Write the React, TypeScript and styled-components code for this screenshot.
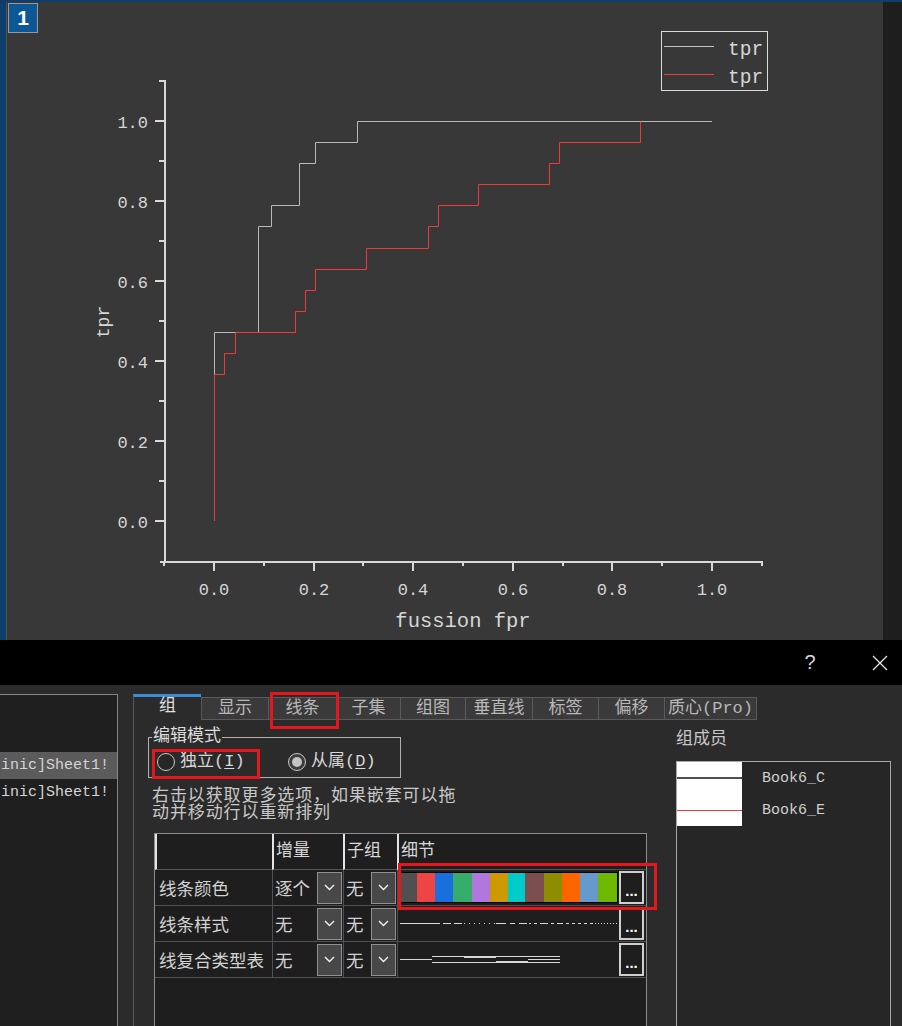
import React from "react";
import styled, { createGlobalStyle, css } from "styled-components";

const MONO = `"Liberation Mono", "Noto Sans CJK SC", monospace`;

const GlobalStyle = createGlobalStyle`
  html, body { margin: 0; padding: 0; background: #2b2b2b; overflow: hidden; }
  #root { width: 902px; height: 1026px; }
`;

const Screen = styled.div`
  position: relative;
  width: 902px;
  height: 1026px;
  display: flex;
  flex-direction: column;
  overflow: hidden;
  font-family: ${MONO};
  background: #2b2b2b;
`;

/* ---------- graph window ---------- */
const GraphWindow = styled.section`
  flex: none;
  height: 640px;
  display: flex;
  box-sizing: border-box;
  padding: 2px 0 0 6px;
  background: #0f3e6a;
`;

const GraphCanvas = styled.div`
  position: relative;
  flex: 1;
  background: #383838;
  border-left: 1px solid #505050;
  overflow: hidden;
`;

const ScrollGutter = styled.div`
  flex: none;
  width: 19px;
  background: #1e1e1e;
`;

const LayerBadge = styled.div`
  position: absolute;
  left: 1px;
  top: 1px;
  width: 30px;
  height: 30px;
  box-sizing: border-box;
  border: 1px solid #9a9a9a;
  background: #0d5894;
  color: #fff;
  font: 700 21px/28px "Liberation Sans", Arial, sans-serif;
  text-align: center;
`;

const PlotSvg = styled.svg`
  display: block;
  font-family: "Liberation Mono", monospace;
`;

/* ---------- dialog ---------- */
const TitleBar = styled.header`
  flex: none;
  height: 45px;
  background: #000;
  display: flex;
  justify-content: flex-end;
  align-items: center;
  gap: 26px;
`;

const TitleButton = styled.div`
  width: 44px;
  height: 45px;
  display: flex;
  align-items: center;
  justify-content: center;
  color: #d8d8d8;
  font: 20px "Liberation Sans", Arial, sans-serif;
`;

const DialogBody = styled.div`
  flex: 1;
  display: flex;
  min-height: 0;
`;

const SourcePanel = styled.div`
  flex: none;
  width: 118px;
  box-sizing: border-box;
  margin-top: 9px;
  border-top: 1px solid #858585;
  border-right: 1px solid #858585;
  background: #1f1f1f;
  padding-top: 57px;
`;

const SourceRow = styled.div<{ $selected?: boolean }>`
  height: 27px;
  line-height: 27px;
  padding-left: 1px;
  font-size: 15px;
  color: #d4d4d4;
  white-space: nowrap;
  overflow: hidden;
  background: ${(p) => (p.$selected ? "#5b5b5b" : "transparent")};
`;

const TabArea = styled.div`
  flex: none;
  width: 527px;
  margin: 9px 0 0 15px;
  display: flex;
  flex-direction: column;
`;

const TabBar = styled.div`
  flex: none;
  height: 26px;
  display: flex;
  align-items: flex-end;
`;

const Tab = styled.div<{ $w: number; $active?: boolean; $last?: boolean }>`
  flex: none;
  width: ${(p) => p.$w}px;
  box-sizing: border-box;
  text-align: center;
  font-size: 17px;
  white-space: nowrap;
  ${(p) =>
    p.$active
      ? css`
          height: 26px;
          border-top: 3px solid #3d8bd4;
          border-left: 1px solid #5a5a5a;
          background: #2b2b2b;
          color: #e0e0e0;
          line-height: 19px;
        `
      : css`
          height: 23px;
          border: 1px solid #5a5a5a;
          border-right-width: ${p.$last ? 1 : 0}px;
          background: #3a3a3a;
          color: #b8b8b8;
          line-height: 21px;
        `}
`;

const TabPane = styled.div`
  flex: 1;
  border-left: 1px solid #5a5a5a;
  display: flex;
  flex-direction: column;
  align-items: flex-start;
`;

const ModeGroup = styled.fieldset`
  margin: 8px 0 0 14px;
  padding: 0;
  width: 253px;
  box-sizing: border-box;
  border: 1px solid #b0b0b0;
`;

const ModeLegend = styled.legend`
  margin-left: 3px;
  padding: 0 1px;
  font-size: 17px;
  line-height: 18px;
  color: #dcdcdc;
`;

const RadioRow = styled.div`
  height: 31px;
  display: flex;
  align-items: center;
  padding-left: 8px;
`;

const RadioOption = styled.label<{ $w: number }>`
  width: ${(p) => p.$w}px;
  display: flex;
  align-items: center;
  gap: 5px;
  font-size: 17px;
  line-height: 20px;
  color: #d8d8d8;
  u { text-decoration: underline; text-underline-offset: 2px; }
`;

const RadioMark = styled.span<{ $checked?: boolean }>`
  width: 18px;
  height: 18px;
  box-sizing: border-box;
  border-radius: 50%;
  border: 1px solid #c8c8c8;
  background: ${(p) => (p.$checked ? "#3c3c3c" : "#262626")};
  display: flex;
  align-items: center;
  justify-content: center;
  &::after {
    content: "";
    display: ${(p) => (p.$checked ? "block" : "none")};
    width: 10px;
    height: 10px;
    border-radius: 50%;
    background: #c4c4c4;
  }
`;

const HelpText = styled.p`
  margin: 10px 0 0 18px;
  width: 312px;
  font-size: 17px;
  letter-spacing: 0.9px;
  line-height: 17px;
  color: #c9c9c9;
`;

const PropTable = styled.div`
  margin: 11px 0 0 20px;
  width: 493px;
  height: 200px;
  box-sizing: border-box;
  border: 1px solid #8c8c8c;
  border-bottom: none;
  background: #1e1e1e;
  display: grid;
  grid-template-columns: 117px 71px 54px 249px;
  grid-auto-rows: 36px;
  align-content: start;
`;

const HeadCell = styled.div`
  box-sizing: border-box;
  border-left: 2px solid #e4e4e4;
  border-bottom: 1px solid #555;
  padding-left: 2px;
  font-size: 17px;
  line-height: 35px;
  color: #d8d8d8;
`;

const BodyCell = styled.div<{ $first?: boolean }>`
  box-sizing: border-box;
  border-left: ${(p) => (p.$first ? "none" : "1px solid #505050")};
  border-bottom: 1px solid #505050;
  display: flex;
  align-items: center;
  justify-content: space-between;
  padding: 0 1px 0 ${(p) => (p.$first ? 4 : 2)}px;
  font-size: 17.5px;
  color: #d2d2d2;
  white-space: nowrap;
`;

const DetailCell = styled(BodyCell)`
  justify-content: flex-start;
  gap: 1px;
  padding-left: 2px;
`;

const DropButton = styled.div`
  flex: none;
  width: 25px;
  height: 32px;
  box-sizing: border-box;
  background: #484848;
  border: 1px solid #909090;
  display: flex;
  align-items: center;
  justify-content: center;
`;

const SwatchBar = styled.div`
  flex: none;
  width: 218px;
  height: 31px;
  box-sizing: border-box;
  border: 1px solid #000;
  background: #000;
  display: flex;
`;

const Swatch = styled.div<{ $c: string; $w: number }>`
  width: ${(p) => p.$w}px;
  background: ${(p) => p.$c};
`;

const PatternSvg = styled.svg`
  flex: none;
  display: block;
`;

const EllipsisButton = styled.div`
  flex: none;
  width: 25px;
  height: 33px;
  box-sizing: border-box;
  border: 2px solid #cfcfcf;
  background: #1e1e1e;
  color: #fff;
  display: flex;
  align-items: flex-end;
  justify-content: center;
  padding-bottom: 6px;
  font: 700 15px/10px "Liberation Sans", Arial, sans-serif;
  letter-spacing: 0px;
`;

const MemberColumn = styled.div`
  flex: none;
  width: 215px;
  margin: 45px 0 0 16px;
  display: flex;
  flex-direction: column;
`;

const MemberLabel = styled.div`
  font-size: 17px;
  line-height: 20px;
  color: #c8c8c8;
`;

const MemberList = styled.div`
  margin-top: 11px;
  flex: 1;
  border: 1px solid #a8a8a8;
  border-bottom: none;
  background: #262626;
`;

const MemberItem = styled.div`
  height: 32px;
  display: flex;
  align-items: center;
`;

const MemberSwatch = styled.div`
  flex: none;
  width: 65px;
  height: 32px;
  background: #fff;
  display: flex;
  align-items: center;
`;

const SwatchLine = styled.div<{ $c: string; $h: number }>`
  width: 100%;
  height: ${(p) => p.$h}px;
  background: ${(p) => p.$c};
`;

const MemberName = styled.span`
  margin-left: 20px;
  font-size: 15px;
  color: #d0d0d0;
`;

const Annotation = styled.div<{ $x: number; $y: number; $w: number; $h: number }>`
  position: absolute;
  left: ${(p) => p.$x}px;
  top: ${(p) => p.$y}px;
  width: ${(p) => p.$w}px;
  height: ${(p) => p.$h}px;
  box-sizing: border-box;
  border: 3px solid #e5161e;
  pointer-events: none;
`;

/* ---------- plot ---------- */
const X = (v: number) => 214 + v * 498;
const Y = (v: number) => 521 - v * 400;
const AXIS = "#d9d9d9";
const LABEL = "#d6d6d6";

function RocPlot() {
  const idx = Array.from({ length: 13 }, (_, i) => i - 1);
  const gray =
    "M214.5,521 V332.5 H258.5 V226.5 H271.5 V205.5 H299.5 V163.5 H315.5 V142.5 H357.5 V121.5 H712";
  const red =
    "M214.5,521 V374.5 H224.5 V353.5 H235.5 V332.5 H295.5 V311.5 H305.5 V290.5 H315.5 V269.5 H366.5 V248.5 H428.5 V226.5 H438.5 V205.5 H478.5 V184.5 H549.5 V163.5 H559.5 V142.5 H640.5 V121.5";
  return (
    <PlotSvg width={876} height={638} viewBox="7 2 876 638">
      <line x1={165} y1={80} x2={165} y2={563} stroke={AXIS} strokeWidth={2} />
      <line x1={160} y1={562} x2={763} y2={562} stroke={AXIS} strokeWidth={2} />
      {idx
        .filter((i) => i >= 0)
        .map((i) => {
          const y = Math.round(Y(i / 10));
          const major = i % 2 === 0 && i <= 10;
          return (
            <line key={"yt" + i} x1={major ? 155 : 159} y1={y} x2={165} y2={y} stroke={AXIS} strokeWidth={2} />
          );
        })}
      {idx.map((i) => {
        const x = Math.round(X(i / 10));
        const major = i % 2 === 0 && i >= 0 && i <= 10;
        return (
          <line key={"xt" + i} x1={x} y1={562} x2={x} y2={major ? 571 : 566} stroke={AXIS} strokeWidth={2} />
        );
      })}
      {[0, 0.2, 0.4, 0.6, 0.8, 1.0].map((v) => (
        <text key={"yl" + v} x={148} y={Math.round(Y(v)) + 7} textAnchor="end" fontSize={17} fill={LABEL}>
          {v.toFixed(1)}
        </text>
      ))}
      {[0, 0.2, 0.4, 0.6, 0.8, 1.0].map((v) => (
        <text key={"xl" + v} x={Math.round(X(v))} y={595} textAnchor="middle" fontSize={17} fill={LABEL}>
          {v.toFixed(1)}
        </text>
      ))}
      <text x={463} y={627} textAnchor="middle" fontSize={20.5} fill={LABEL}>
        fussion fpr
      </text>
      <text transform="translate(109 322) rotate(-90)" textAnchor="middle" fontSize={18} fill={LABEL}>
        tpr
      </text>
      <path d={gray} fill="none" stroke="#b9b9b9" strokeWidth={1} />
      <path d={red} fill="none" stroke="#f03a3a" strokeWidth={1} />
      <rect x={661.5} y={31.5} width={106} height={59} fill="none" stroke="#dadada" strokeWidth={1} />
      <line x1={664} y1={46.5} x2={714} y2={46.5} stroke="#c4c4c4" strokeWidth={1} />
      <line x1={664} y1={74.5} x2={714} y2={74.5} stroke="#f03a3a" strokeWidth={1} />
      <text x={728} y={55} fontSize={19.5} fill={LABEL}>
        tpr
      </text>
      <text x={728} y={83} fontSize={19.5} fill={LABEL}>
        tpr
      </text>
    </PlotSvg>
  );
}

/* ---------- table pieces ---------- */
const Chevron = () => (
  <svg width="11" height="7" viewBox="0 0 11 7">
    <polyline points="1,1 5.5,5.5 10,1" fill="none" stroke="#f2f2f2" strokeWidth="1.4" />
  </svg>
);

const swatches: [string, number][] = [
  ["#505050", 16],
  ["#ee4444", 18],
  ["#1a6fdf", 18],
  ["#37ad6b", 19],
  ["#b177de", 18],
  ["#cc9900", 18],
  ["#00cbcc", 18],
  ["#7d4e4e", 19],
  ["#8e8c00", 18],
  ["#fb6500", 18],
  ["#6699cc", 18],
  ["#6fb802", 19],
];

const styleSegments: [number, number][] = [
  [0, 40], [43, 51], [54, 62], [64, 65], [69, 70], [74, 75], [79, 80], [84, 85], [89, 90], [94, 95],
  [96, 106], [110, 115], [119, 127], [129, 131], [134, 137], [140, 148], [151, 154], [157, 163],
  [166, 169], [172, 175], [178, 181], [184, 187], [190, 193], [195, 196], [198, 199], [201, 202],
  [204, 205], [207, 208], [210, 211], [213, 214], [216, 217],
];

const LineStyles = () => (
  <PatternSvg width="218" height="33" viewBox="0 0 218 33">
    <path d={styleSegments.map(([a, b]) => `M${a} 16.5H${b}`).join("")} stroke="#d8d8d8" strokeWidth="1" />
  </PatternSvg>
);

const CompoundLines = () => (
  <PatternSvg width="218" height="33" viewBox="0 0 218 33">
    <path d="M0 16.5H32 M32 13.5H160 M32 19.5H160 M128 16.5H160" stroke="#d8d8d8" strokeWidth="1" />
    <rect x="64" y="13" width="32" height="2" fill="#d8d8d8" />
    <rect x="96" y="18" width="32" height="2" fill="#d8d8d8" />
  </PatternSvg>
);

const tabs = [
  { label: "组", w: 68, active: true },
  { label: "显示", w: 67 },
  { label: "线条", w: 68 },
  { label: "子集", w: 64 },
  { label: "组图", w: 65 },
  { label: "垂直线", w: 67 },
  { label: "标签", w: 66 },
  { label: "偏移", w: 66 },
  { label: "质心(Pro)", w: 93 },
];

const rows = [
  { name: "线条颜色", inc: "逐个", detail: "colors" },
  { name: "线条样式", inc: "无", detail: "styles" },
  { name: "线复合类型表", inc: "无", detail: "compound" },
];

export default function App() {
  return (
    <Screen>
      <GlobalStyle />
      <GraphWindow>
        <GraphCanvas>
          <RocPlot />
          <LayerBadge>1</LayerBadge>
        </GraphCanvas>
        <ScrollGutter />
      </GraphWindow>

      <TitleBar>
        <TitleButton>?</TitleButton>
        <TitleButton>
          <svg width="16" height="16" viewBox="0 0 16 16">
            <path d="M1 1L15 15M15 1L1 15" stroke="#e6e6e6" strokeWidth="1.3" />
          </svg>
        </TitleButton>
      </TitleBar>

      <DialogBody>
        <SourcePanel>
          <SourceRow $selected>inic]Sheet1!</SourceRow>
          <SourceRow>inic]Sheet1!</SourceRow>
        </SourcePanel>

        <TabArea>
          <TabBar>
            {tabs.map((t, i) => (
              <Tab key={t.label} $w={t.w} $active={t.active} $last={i === tabs.length - 1}>
                {t.label}
              </Tab>
            ))}
          </TabBar>
          <TabPane>
            <ModeGroup>
              <ModeLegend>编辑模式</ModeLegend>
              <RadioRow>
                <RadioOption $w={131}>
                  <RadioMark />
                  <span>
                    独立(<u>I</u>)
                  </span>
                </RadioOption>
                <RadioOption $w={100}>
                  <RadioMark $checked />
                  <span>
                    从属(<u>D</u>)
                  </span>
                </RadioOption>
              </RadioRow>
            </ModeGroup>
            <HelpText>右击以获取更多选项，如果嵌套可以拖动并移动行以重新排列</HelpText>
            <PropTable>
              <HeadCell />
              <HeadCell>增量</HeadCell>
              <HeadCell>子组</HeadCell>
              <HeadCell>细节</HeadCell>
              {rows.map((r) => (
                <React.Fragment key={r.name}>
                  <BodyCell $first>{r.name}</BodyCell>
                  <BodyCell>
                    <span>{r.inc}</span>
                    <DropButton>
                      <Chevron />
                    </DropButton>
                  </BodyCell>
                  <BodyCell>
                    <span>无</span>
                    <DropButton>
                      <Chevron />
                    </DropButton>
                  </BodyCell>
                  <DetailCell>
                    {r.detail === "colors" && (
                      <SwatchBar>
                        {swatches.map(([c, w]) => (
                          <Swatch key={c} $c={c} $w={w} />
                        ))}
                      </SwatchBar>
                    )}
                    {r.detail === "styles" && <LineStyles />}
                    {r.detail === "compound" && <CompoundLines />}
                    <EllipsisButton>...</EllipsisButton>
                  </DetailCell>
                </React.Fragment>
              ))}
            </PropTable>
          </TabPane>
        </TabArea>

        <MemberColumn>
          <MemberLabel>组成员</MemberLabel>
          <MemberList>
            <MemberItem>
              <MemberSwatch>
                <SwatchLine $c="#505050" $h={2} />
              </MemberSwatch>
              <MemberName>Book6_C</MemberName>
            </MemberItem>
            <MemberItem>
              <MemberSwatch>
                <SwatchLine $c="#e04040" $h={1} />
              </MemberSwatch>
              <MemberName>Book6_E</MemberName>
            </MemberItem>
          </MemberList>
        </MemberColumn>
      </DialogBody>

      <Annotation $x={270} $y={692} $w={69} $h={37} />
      <Annotation $x={152} $y={749} $w={108} $h={30} />
      <Annotation $x={398} $y={863} $w={259} $h={47} />
    </Screen>
  );
}
